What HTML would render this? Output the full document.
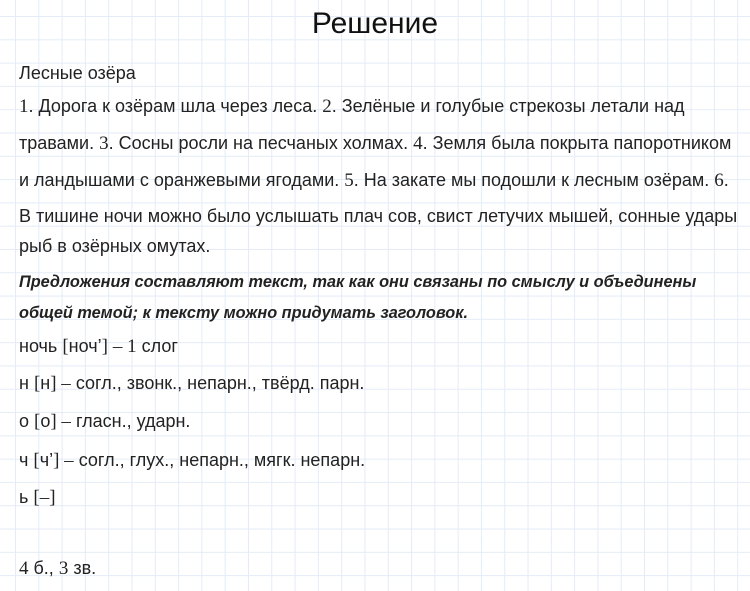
<!DOCTYPE html>
<html><head><meta charset="utf-8"><style>
body{margin:0;width:750px;height:591px;overflow:hidden;background-color:#fff;
background-image:linear-gradient(#e4ecf7 1px,transparent 1px),linear-gradient(90deg,#e4ecf7 1px,transparent 1px);
background-size:23.3px 23.3px;background-position:15px 16px;font-family:"Liberation Sans",sans-serif;color:#222;position:relative}
.t{position:absolute;left:0;width:750px;text-align:center;top:7px;font-size:30px;color:#111}
.l{position:absolute;left:19px;font-size:18px;white-space:nowrap;line-height:20px}
.s{font-family:"Liberation Serif",serif;font-size:19px}
b{font-style:italic;font-size:16.3px}
</style></head><body>
<div class="t">Решение</div>
<div class="l" style="top:63px">Лесные озёра</div>
<div class="l" style="top:96px"><span class="s">1</span>. Дорога к озёрам шла через леса. <span class="s">2</span>. Зелёные и голубые стрекозы летали над</div>
<div class="l" style="top:133px">травами. <span class="s">3</span>. Сосны росли на песчаных холмах. <span class="s">4</span>. Земля была покрыта папоротником</div>
<div class="l" style="top:170px">и ландышами с оранжевыми ягодами. <span class="s">5</span>. На закате мы подошли к лесным озёрам. <span class="s">6</span>.</div>
<div class="l" style="top:206px">В тишине ночи можно было услышать плач сов, свист летучих мышей, сонные удары</div>
<div class="l" style="top:236px">рыб в озёрных омутах.</div>
<div class="l" style="top:271px"><b>Предложения составляют текст, так как они связаны по смыслу и объединены</b></div>
<div class="l" style="top:302px"><b>общей темой; к тексту можно придумать заголовок.</b></div>
<div class="l" style="top:336px">ночь <span class="s">[</span>ноч’<span class="s">]</span> <span class="s">– 1</span> слог</div>
<div class="l" style="top:373px">н <span class="s">[</span>н<span class="s">] –</span> согл., звонк., непарн., твёрд. парн.</div>
<div class="l" style="top:411px">о <span class="s">[</span>о<span class="s">] –</span> гласн., ударн.</div>
<div class="l" style="top:450px">ч <span class="s">[</span>ч’<span class="s">] –</span> согл., глух., непарн., мягк. непарн.</div>
<div class="l" style="top:487px">ь <span class="s">[–]</span></div>
<div class="l" style="top:558px"><span class="s">4</span> б., <span class="s">3</span> зв.</div>
</body></html>
